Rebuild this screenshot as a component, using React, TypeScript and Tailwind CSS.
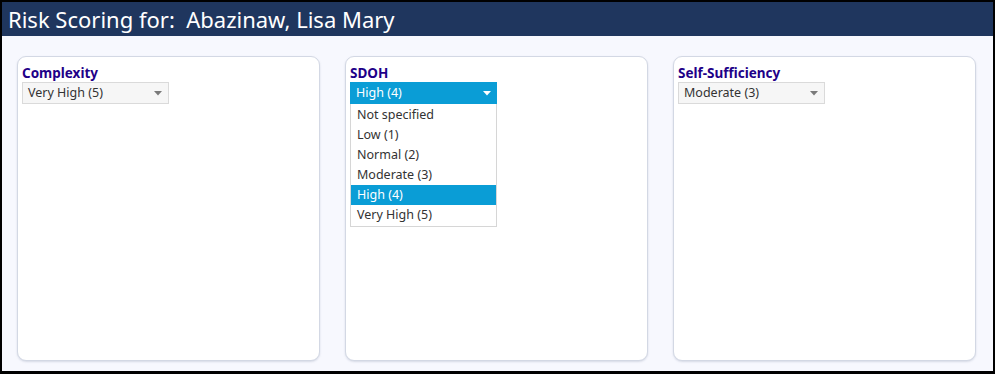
import React from "react";

const font = { fontFamily: '"Noto Sans", "Open Sans", sans-serif' };

function Arrow({ color }: { color: string }) {
  return (
    <svg width="8" height="5" viewBox="0 0 8 5" className="mr-[6px]">
      <polygon points="0,0 8,0 4,4.5" fill={color} />
    </svg>
  );
}

function Select({ value, open }: { value: string; open?: boolean }) {
  if (open) {
    return (
      <div className="w-[147px] h-[22px] bg-[#0a9dd6] flex items-center justify-between pl-[6px] text-white text-[12.5px]">
        <span>{value}</span>
        <Arrow color="#ffffff" />
      </div>
    );
  }
  return (
    <div className="w-[147px] h-[22px] bg-[#f6f6f6] border border-[#dadada] flex items-center justify-between pl-[5px] text-[#333] text-[12.5px]">
      <span>{value}</span>
      <Arrow color="#7a7a7a" />
    </div>
  );
}

const options = ["Not specified", "Low (1)", "Normal (2)", "Moderate (3)", "High (4)", "Very High (5)"];

function Card({ title, value, open }: { title: string; value: string; open?: boolean }) {
  return (
    <div className="flex-1 bg-white border border-[#d3d8e4] rounded-[9px] shadow-[0_1px_2px_rgba(120,130,160,0.25)] pt-[7px] px-[4px]">
      <div className="text-[13.5px] font-bold text-[#1e0088] leading-[18px]">{title}</div>
      <div className="relative">
        <Select value={value} open={open} />
        {open && (
          <div className="absolute left-0 top-[22px] w-[147px] bg-white border border-[#d6d6d6] border-t-0 text-[12.5px] text-[#333] py-[1px]">
            {options.map((o) => (
              <div
                key={o}
                className={
                  o === value
                    ? "h-[20px] leading-[20px] pl-[6px] bg-[#0a9dd6] text-white"
                    : "h-[20px] leading-[20px] pl-[6px]"
                }
              >
                {o}
              </div>
            ))}
          </div>
        )}
      </div>
    </div>
  );
}

export default function App() {
  return (
    <div style={font} className="w-[995px] h-[374px] bg-black pt-[2px] pl-[2px] pr-[2px] pb-[3px] flex flex-col">
      <div className="h-[34px] bg-[#1f365e] text-white text-[22px] flex items-center pl-[6px] whitespace-pre">
        Risk Scoring for:  Abazinaw, Lisa Mary
      </div>
      <div className="flex-1 bg-[#f7f8fe] flex gap-[25px] pl-[15px] pr-[17px] pt-[20px] pb-[10px]">
        <Card title="Complexity" value="Very High (5)" />
        <Card title="SDOH" value="High (4)" open />
        <Card title="Self-Sufficiency" value="Moderate (3)" />
      </div>
    </div>
  );
}
